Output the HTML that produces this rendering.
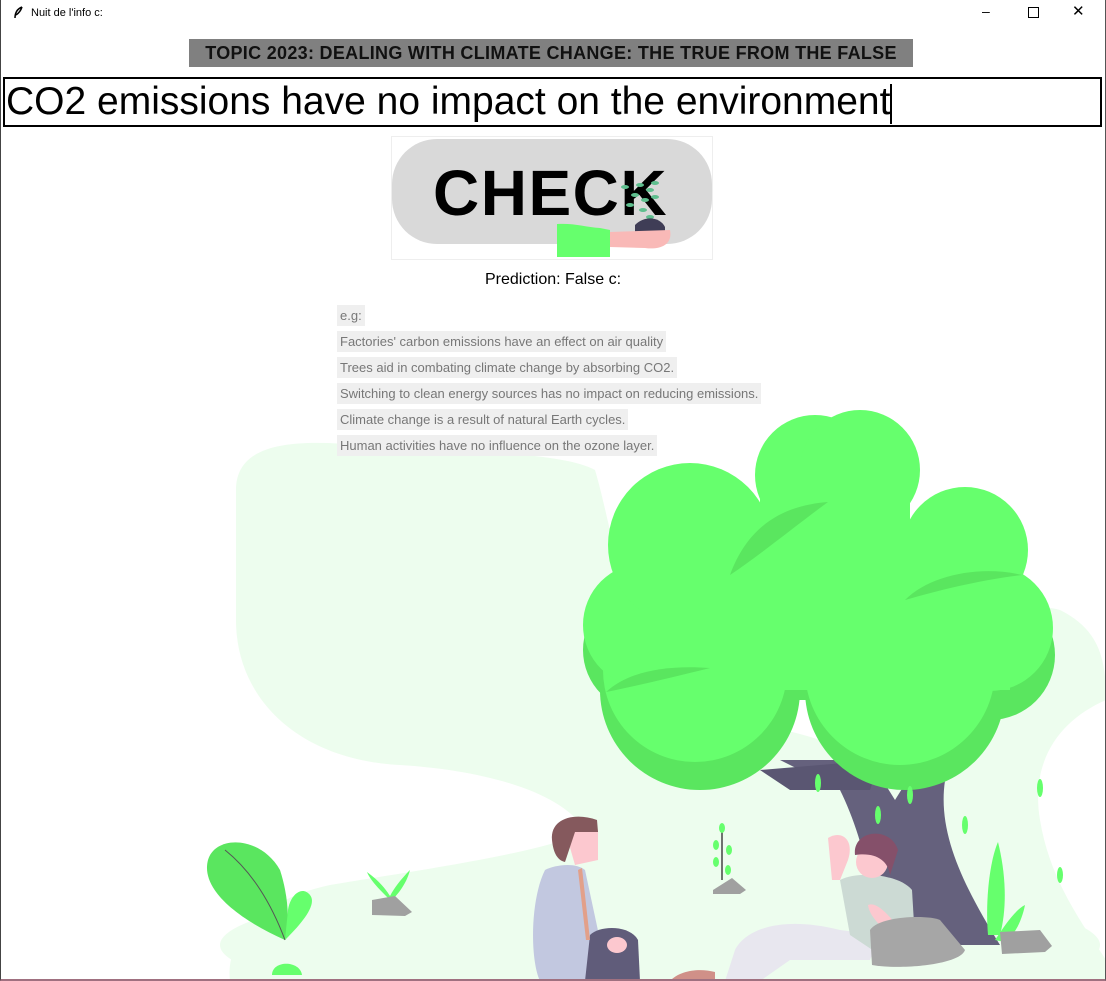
<!DOCTYPE html>
<html><head><meta charset="utf-8"><style>
html,body{margin:0;padding:0;}
body{width:1106px;height:981px;position:relative;overflow:hidden;background:#fff;font-family:"Liberation Sans",sans-serif;}
.win{position:absolute;left:0;top:0;width:1104px;height:979px;border-left:1px solid #444;border-right:1px solid #555;border-bottom:2px solid #a07080;}
.title{position:absolute;left:31px;top:7px;font-size:11px;color:#000;}
.ctl{position:absolute;top:3px;font-size:14px;color:#000;}
.topic{position:absolute;left:189px;top:39px;width:724px;height:28px;background:#808080;color:#111;font-weight:bold;font-size:18px;line-height:28px;text-align:center;letter-spacing:0.3px;white-space:nowrap;}
.entry{position:absolute;left:3px;top:77px;width:1094px;height:46px;border:2px solid #000;font-size:39px;line-height:46px;padding-left:1px;white-space:nowrap;}
.cursor{display:inline-block;width:2px;height:40px;background:#000;vertical-align:middle;}
.pred{position:absolute;left:0;width:1106px;top:271px;text-align:center;font-size:16px;}
.ex{position:absolute;left:337px;font-size:13px;color:#777;background:#efefef;padding:0 3px;height:21px;line-height:21px;}
</style></head><body>
<svg style="position:absolute;left:0;top:0" width="1106" height="981">
<path d="M236 490 C236 440 300 440 360 445 C440 452 560 450 595 470 C610 520 620 600 660 680 C700 720 760 720 820 740 C900 700 1000 590 1060 610 C1100 630 1106 660 1106 700 C1060 720 1030 760 1040 820 C1050 880 1080 920 1106 960 L1106 981 L230 981 C225 940 260 900 330 885 C420 870 560 850 585 830 C560 790 480 770 400 765 C300 760 236 700 236 620 Z" fill="#edfdee"/>
<ellipse cx="660" cy="945" rx="440" ry="65" fill="#edfdee"/>
<path d="M780 760 L840 790 C860 830 880 900 870 945 L1000 945 C960 880 930 820 950 760 L920 760 L895 800 L870 760 Z" fill="#65617d"/>
<path d="M760 770 L880 760 L870 790 L790 790Z" fill="#5a5672"/>
<g fill="#5ae65f">
<circle cx="700" cy="690" r="100"/><circle cx="905" cy="690" r="100"/><circle cx="990" cy="655" r="65"/><circle cx="645" cy="650" r="62"/><rect x="640" y="600" width="380" height="100"/>
</g>
<g fill="#66ff6d">
<circle cx="695" cy="670" r="92"/><circle cx="900" cy="670" r="95"/><circle cx="990" cy="628" r="63"/><circle cx="645" cy="625" r="62"/>
<circle cx="690" cy="545" r="82"/><circle cx="965" cy="550" r="63"/><circle cx="815" cy="475" r="60"/><circle cx="860" cy="470" r="60"/><rect x="760" y="458" width="150" height="100"/>
<rect x="640" y="530" width="370" height="160"/>
</g>
<path d="M730 575 C750 520 790 505 828 502 C790 530 760 555 730 575Z" fill="#5ae65f"/>
<path d="M905 600 C930 575 980 565 1022 575 C980 580 940 590 905 600Z" fill="#5ae65f"/>
<path d="M606 692 C630 670 670 665 710 668 C670 678 640 685 606 692Z" fill="#5ae65f"/>
<g fill="#66ff6d"><ellipse cx="818" cy="783" rx="3" ry="9"/><ellipse cx="910" cy="795" rx="3" ry="9"/><ellipse cx="965" cy="825" rx="3" ry="9"/><ellipse cx="1040" cy="788" rx="3" ry="9"/><ellipse cx="1060" cy="875" rx="3" ry="8"/><ellipse cx="878" cy="815" rx="3" ry="9"/></g>
<path d="M285 940 C240 920 200 890 208 860 C215 835 260 835 280 870 C288 895 290 920 285 940Z" fill="#5ae65f"/>
<path d="M285 940 C300 925 318 905 310 895 C302 885 290 895 288 910 Z" fill="#66ff6d"/>
<path d="M285 940 C270 900 250 870 225 850" stroke="#555" stroke-width="1" fill="none"/>
<path d="M272 975 C272 960 300 960 302 975Z" fill="#66ff6d"/>
<path d="M388 898 C380 890 370 880 367 872 C378 880 385 888 390 896 C395 886 405 875 410 870 C407 882 400 892 392 900Z" fill="#66ff6d"/>
<path d="M372 900 L395 896 L412 912 L405 916 L372 915Z" fill="#a0a0a0"/>
<path d="M722 880 L722 828" stroke="#444" stroke-width="1.5"/>
<g fill="#66ff6d"><ellipse cx="722" cy="828" rx="3" ry="5"/><ellipse cx="716" cy="845" rx="3" ry="5"/><ellipse cx="729" cy="850" rx="3" ry="5"/><ellipse cx="716" cy="862" rx="3" ry="5"/><ellipse cx="728" cy="870" rx="3" ry="5"/></g>
<path d="M713 890 L732 878 L746 890 L740 894 L713 894Z" fill="#a0a0a0"/>
<path d="M988 935 C985 900 990 860 998 842 C1005 870 1008 905 1000 935Z" fill="#66ff6d"/>
<path d="M995 940 C1005 925 1015 910 1025 905 C1022 920 1015 935 1005 942Z" fill="#66ff6d"/>
<path d="M1000 932 L1040 930 L1052 946 L1045 952 L1002 954Z" fill="#a0a0a0"/>
<path d="M545 870 C555 865 575 862 585 870 L600 940 L610 981 L540 981 C530 960 530 900 545 870Z" fill="#c2c8e0"/>
<path d="M590 935 C600 925 630 925 638 940 L640 981 L585 981Z" fill="#605c7a"/>
<path d="M582 868 L590 940 L586 940 L578 870Z" fill="#e2a08a"/>
<path d="M565 830 C565 815 590 815 598 830 L598 860 L575 865 Z" fill="#fcc8cf"/>
<path d="M552 840 C550 818 575 812 597 820 L598 832 L575 832 L565 862 C556 860 553 850 552 840Z" fill="#85595d"/>
<ellipse cx="617" cy="945" rx="10" ry="8" fill="#fcc8cf"/>
<path d="M735 950 C745 930 780 915 840 930 L880 935 L870 960 L790 960 L760 981 L725 981Z" fill="#e8e7ef"/>
<path d="M840 880 C860 870 900 875 912 890 L915 940 L880 955 L850 935Z" fill="#ccdad4"/>
<path d="M828 838 C840 830 855 838 848 860 L840 880 L832 880Z" fill="#fcc8cf"/>
<circle cx="872" cy="862" r="16" fill="#fcc8cf"/>
<path d="M855 855 C852 830 890 825 898 850 L890 875 C888 860 875 852 855 855Z" fill="#85506a"/>
<path d="M868 905 C880 900 895 925 915 945 L908 948 C890 935 870 920 868 905Z" fill="#fcc8cf"/>
<path d="M870 930 C880 915 930 915 940 920 L965 950 C960 965 900 970 872 965Z" fill="#a6a6a6"/>
<path d="M670 981 C680 970 700 968 715 972 L715 981Z" fill="#d09088"/>
</svg>
<div class="win"></div>
<svg style="position:absolute;left:13px;top:6px" width="10" height="13"><path d="M9 1 C4 3 2 7 2 12 M3 9 C6 7 8 4 9 1" stroke="#000" stroke-width="1.5" fill="none"/></svg>
<div class="title">Nuit de l'info c:</div>
<div class="ctl" style="left:982px;">&#8211;</div>
<div style="position:absolute;left:1028px;top:7px;width:9px;height:9px;border:1px solid #000;"></div>
<div class="ctl" style="left:1072px;top:2px;font-size:15px;">✕</div>
<div class="topic">TOPIC 2023: DEALING WITH CLIMATE CHANGE: THE TRUE FROM THE FALSE</div>
<div class="entry">CO2 emissions have no impact on the environment<span class="cursor"></span></div>
<div style="position:absolute;left:391px;top:136px;width:320px;height:122px;border:1px solid #eee;"></div>
<div style="position:absolute;left:392px;top:139px;width:320px;height:105px;background:#d9d9d9;border-radius:45px;"></div>
<div style="position:absolute;left:433px;top:158px;font-weight:bold;font-size:64px;letter-spacing:1.5px;line-height:70px;">CHECK</div>
<svg style="position:absolute;left:555px;top:175px" width="120" height="85">
<g fill="#5fbf8f"><ellipse cx="85" cy="10" rx="4" ry="2"/><ellipse cx="95" cy="15" rx="4" ry="2"/><ellipse cx="80" cy="20" rx="4" ry="2"/><ellipse cx="100" cy="8" rx="4" ry="2"/><ellipse cx="90" cy="25" rx="4" ry="2"/><ellipse cx="75" cy="30" rx="4" ry="2"/><ellipse cx="100" cy="22" rx="4" ry="2"/><ellipse cx="88" cy="35" rx="4" ry="2"/><ellipse cx="95" cy="42" rx="4" ry="2"/><ellipse cx="70" cy="12" rx="4" ry="2"/></g>
<path d="M80 50 C90 40 105 42 110 52 L110 60 L80 60Z" fill="#3f3d56"/>
<path d="M55 57 L115 55 C118 70 105 75 90 73 L55 72Z" fill="#f9b9b7"/>
<path d="M2 49 C20 48 30 52 45 53 L55 55 L55 82 L2 82Z" fill="#66ff6d"/>
</svg>
<div class="pred">Prediction: False c:</div>
<div class="ex" style="top:305px;">e.g:</div>
<div class="ex" style="top:331px;">Factories' carbon emissions have an effect on air quality</div>
<div class="ex" style="top:357px;">Trees aid in combating climate change by absorbing CO2.</div>
<div class="ex" style="top:383px;">Switching to clean energy sources has no impact on reducing emissions.</div>
<div class="ex" style="top:409px;">Climate change is a result of natural Earth cycles.</div>
<div class="ex" style="top:435px;">Human activities have no influence on the ozone layer.</div>
</body></html>
